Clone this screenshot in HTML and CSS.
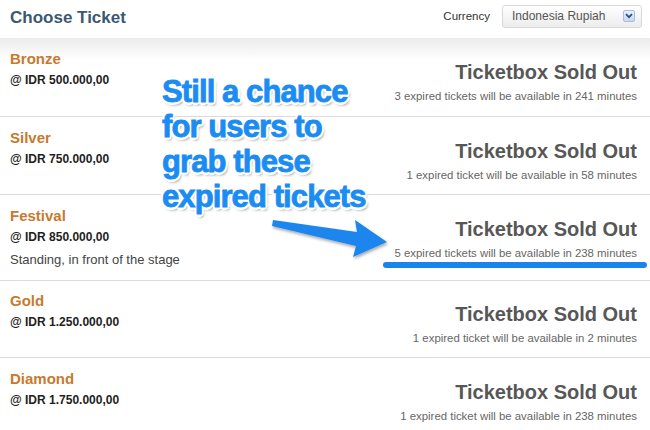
FILE: index.html
```html
<!DOCTYPE html>
<html>
<head>
<meta charset="utf-8">
<link rel="stylesheet" href="styles.css">
</head>
<body>
<div class="page">
  <header class="head">
    <h1 class="title">Choose Ticket</h1>
    <div class="currency">
      <span class="cur-label">Currency</span>
      <div class="select">
        <span class="select-text">Indonesia Rupiah</span>
        <span class="select-btn">
          <svg width="8" height="6" viewBox="0 0 8 6"><path d="M1 1.2 L4 4.2 L7 1.2" fill="none" stroke="#2a4f8a" stroke-width="1.8"/></svg>
        </span>
      </div>
    </div>
  </header>
  <div class="list">
    <div class="row first">
      <div class="info">
        <div class="name">Bronze</div>
        <div class="price">@ IDR 500.000,00</div>
      </div>
      <div class="status">
        <div class="sold">Ticketbox Sold Out</div>
        <div class="avail">3 expired tickets will be available in 241 minutes</div>
      </div>
    </div>
    <div class="row">
      <div class="info">
        <div class="name">Silver</div>
        <div class="price">@ IDR 750.000,00</div>
      </div>
      <div class="status">
        <div class="sold">Ticketbox Sold Out</div>
        <div class="avail">1 expired ticket will be available in 58 minutes</div>
      </div>
    </div>
    <div class="row">
      <div class="info">
        <div class="name">Festival</div>
        <div class="price">@ IDR 850.000,00</div>
        <div class="desc">Standing, in front of the stage</div>
      </div>
      <div class="status">
        <div class="sold">Ticketbox Sold Out</div>
        <div class="avail">5 expired tickets will be available in 238 minutes</div>
      </div>
    </div>
    <div class="row short">
      <div class="info">
        <div class="name">Gold</div>
        <div class="price">@ IDR 1.250.000,00</div>
      </div>
      <div class="status">
        <div class="sold">Ticketbox Sold Out</div>
        <div class="avail">1 expired ticket will be available in 2 minutes</div>
      </div>
    </div>
    <div class="row">
      <div class="info">
        <div class="name">Diamond</div>
        <div class="price">@ IDR 1.750.000,00</div>
      </div>
      <div class="status">
        <div class="sold">Ticketbox Sold Out</div>
        <div class="avail">1 expired ticket will be available in 238 minutes</div>
      </div>
    </div>
  </div>

  <div class="callout">Still a chance<br>for users to<br>grab these<br>expired tickets</div>
  <svg class="arrow" width="650" height="430" viewBox="0 0 650 430">
    <defs>
      <filter id="sh" x="-10%" y="-10%" width="130%" height="140%">
        <feDropShadow dx="1" dy="2" stdDeviation="1.5" flood-color="#000" flood-opacity="0.35"/>
      </filter>
    </defs>
    <path d="M273 220 L357 232 L355 220 L387 242 L353 257 L356 246 L272 226 Z" fill="#1a86ee" filter="url(#sh)"/>
    <line x1="386" y1="265" x2="644" y2="265" stroke="#1a84ec" stroke-width="6" stroke-linecap="round"/>
  </svg>
</div>
</body>
</html>
```

FILE: styles.css
```css
html, body {
  margin: 0;
  padding: 0;
  background: #fff;
}
body {
  font-family: "Liberation Sans", Arial, sans-serif;
  width: 650px;
  height: 430px;
  overflow: hidden;
}
.page {
  position: relative;
  width: 650px;
  height: 430px;
}
.head {
  height: 38px;
  display: flex;
  align-items: center;
  justify-content: space-between;
  padding: 0 8px 0 10px;
  box-sizing: border-box;
}
.title {
  margin: 0;
  font-size: 17px;
  font-weight: bold;
  color: #3b5871;
  margin-top: -3px;
}
.currency {
  display: flex;
  align-items: center;
  gap: 12px;
  margin-top: -6px;
}
.cur-label {
  font-size: 11.5px;
  color: #333;
}
.select {
  width: 140px;
  height: 23px;
  box-sizing: border-box;
  border: 1px solid #d8d8d8;
  border-radius: 3px;
  background: linear-gradient(#ffffff, #ececec);
  display: flex;
  align-items: center;
  justify-content: space-between;
  padding: 0 6px 0 9px;
}
.select-text {
  font-size: 12px;
  color: #555;
}
.select-btn {
  width: 12px;
  height: 12px;
  box-sizing: border-box;
  border: 1px solid #a9bdd6;
  background: linear-gradient(#e8f0fa, #c9d9ee);
  border-radius: 2px;
  display: flex;
  align-items: center;
  justify-content: center;
}
.list {
  display: flex;
  flex-direction: column;
}
.row {
  display: flex;
  justify-content: space-between;
  align-items: flex-start;
  padding: 12px 13px 9px 10px;
  border-bottom: 1px solid #dcdcdc;
  min-height: 56px;
}
.row.first {
  background: linear-gradient(#ebebeb 0px, #ffffff 22px);
  min-height: 57px;
}
.row.short {
  padding-top: 11px;
  min-height: 55px;
}
.name {
  font-size: 15px;
  font-weight: bold;
  color: #c77a2d;
  line-height: 18px;
}
.price {
  font-size: 12px;
  font-weight: bold;
  color: #1e1e1e;
  line-height: 24px;
}
.desc {
  font-size: 13px;
  color: #444;
  line-height: 22px;
}
.status {
  text-align: right;
  margin-top: 8px;
}
.sold {
  font-size: 20px;
  font-weight: bold;
  color: #575757;
  line-height: 28px;
}
.avail {
  font-size: 11.4px;
  color: #666;
  line-height: 20px;
}
.callout {
  position: absolute;
  left: 162px;
  top: 74px;
  font-size: 31px;
  line-height: 35px;
  font-weight: bold;
  letter-spacing: -0.9px;
  color: #1a8cf2;
  -webkit-text-stroke: 0.8px #1a8cf2;
  white-space: nowrap;
  text-shadow:
    2.5px 0 0 #fff, -2.5px 0 0 #fff, 0 2.5px 0 #fff, 0 -2.5px 0 #fff,
    1.8px 1.8px 0 #fff, -1.8px 1.8px 0 #fff, 1.8px -1.8px 0 #fff, -1.8px -1.8px 0 #fff,
    2px 3px 3px rgba(0, 0, 0, 0.45);
}
.arrow {
  position: absolute;
  left: 0;
  top: 0;
  pointer-events: none;
}
```
